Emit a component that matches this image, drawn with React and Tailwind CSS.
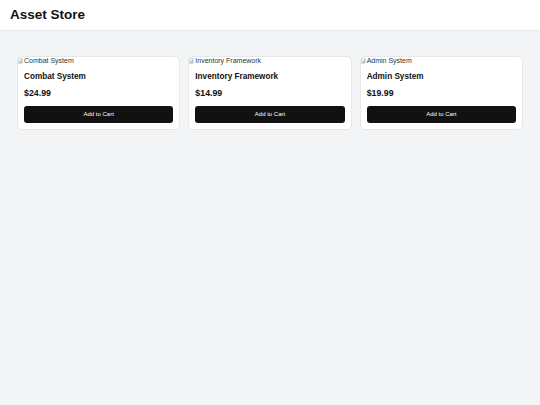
import React from 'react';

const products = [
  { id: 1, name: 'Combat System', price: 24.99 },
  { id: 2, name: 'Inventory Framework', price: 14.99 },
  { id: 3, name: 'Admin System', price: 19.99 },
];

const BrokenImage = ({ alt }) => (
  <div className="flex items-center h-[8px] text-[7px] leading-[8px] text-[#333]">
    <svg width="5" height="6" viewBox="0 0 16 18" className="mr-[1px] shrink-0">
      <rect x="1" y="1" width="14" height="16" fill="#f2f2f2" stroke="#a0a0a0" />
      <path d="M3 14 L7 9 L10 12 L12 10 L14 14 Z" fill="#7aa35c" />
      <circle cx="11" cy="6" r="1.8" fill="#6a9ad6" />
    </svg>
    <span>{alt}</span>
  </div>
);

const ProductCard = ({ product }) => (
  <div className="bg-white rounded-[5px] border border-[#e5e7eb] overflow-hidden">
    <BrokenImage alt={product.name} />
    <div className="px-[6px] pt-[6px] pb-[6px]">
      <h3 className="text-[8.2px] font-bold text-[#111] leading-[11px]">{product.name}</h3>
      <p className="mt-[6px] text-[8.8px] font-bold text-[#111] leading-[11px]">${product.price.toFixed(2)}</p>
      <button className="mt-[3px] w-full h-[17px] bg-[#111] text-white text-[6px] rounded-[3px]">Add to Cart</button>
    </div>
  </div>
);

export default function App() {
  return (
    <div className="min-h-[405px] bg-[#f3f4f6]" style={{ fontFamily: '"Liberation Sans", Arial, sans-serif' }}>
      <header className="bg-white h-[31px] px-[10px] flex items-center border-b border-[#e9eaec]">
        <h1 className="text-[13.5px] font-bold text-[#111]">Asset Store</h1>
      </header>
      <main className="px-[17px] pt-[25px]">
        <div className="grid grid-cols-3 gap-[8px]">
          {products.map((p) => (
            <ProductCard key={p.id} product={p} />
          ))}
        </div>
      </main>
    </div>
  );
}
